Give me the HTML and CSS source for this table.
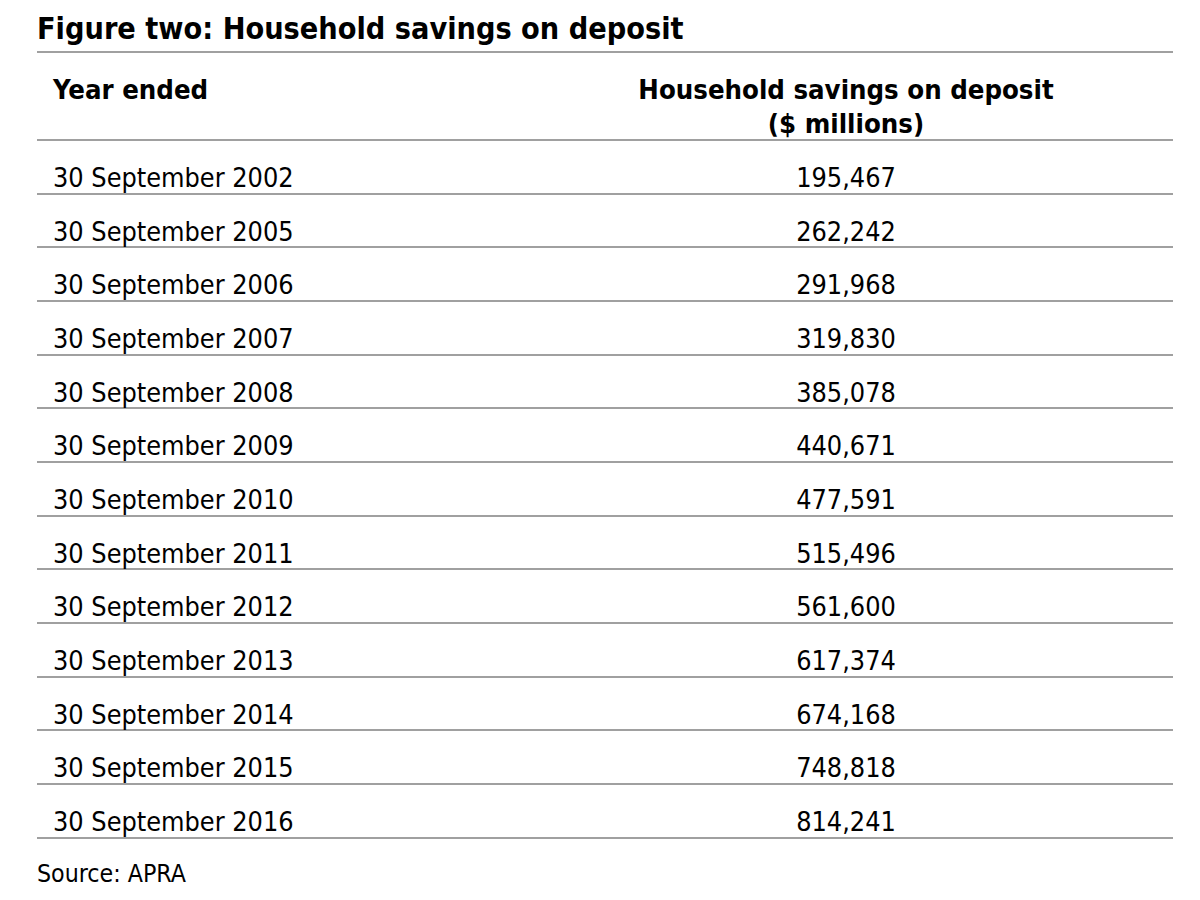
FILE: index.html
```html
<!DOCTYPE html>
<html>
<head>
<meta charset="utf-8">
<link rel="stylesheet" href="styles.css">
</head>
<body>
<div class="figure">
  <h1 class="title">Figure two: Household savings on deposit</h1>
  <div class="table">
    <div class="row head">
      <div class="c1">Year ended</div>
      <div class="c2">Household savings on deposit<br>($ millions)</div>
    </div>
    <div class="row"><div class="c1">30 September 2002</div><div class="c2">195,467</div></div>
    <div class="row"><div class="c1">30 September 2005</div><div class="c2">262,242</div></div>
    <div class="row"><div class="c1">30 September 2006</div><div class="c2">291,968</div></div>
    <div class="row"><div class="c1">30 September 2007</div><div class="c2">319,830</div></div>
    <div class="row"><div class="c1">30 September 2008</div><div class="c2">385,078</div></div>
    <div class="row"><div class="c1">30 September 2009</div><div class="c2">440,671</div></div>
    <div class="row"><div class="c1">30 September 2010</div><div class="c2">477,591</div></div>
    <div class="row"><div class="c1">30 September 2011</div><div class="c2">515,496</div></div>
    <div class="row"><div class="c1">30 September 2012</div><div class="c2">561,600</div></div>
    <div class="row"><div class="c1">30 September 2013</div><div class="c2">617,374</div></div>
    <div class="row"><div class="c1">30 September 2014</div><div class="c2">674,168</div></div>
    <div class="row"><div class="c1">30 September 2015</div><div class="c2">748,818</div></div>
    <div class="row"><div class="c1">30 September 2016</div><div class="c2">814,241</div></div>
  </div>
  <p class="source">Source: APRA</p>
</div>
</body>
</html>
```

FILE: styles.css
```css
html, body {
  margin: 0;
  padding: 0;
  background: #ffffff;
}

body {
  font-family: "DejaVu Sans Condensed", "DejaVu Sans", sans-serif;
  color: #000000;
}

.figure {
  width: 1136px;
  padding-left: 37px;
  padding-top: 11px;
}

.title {
  margin: 0;
  font-size: 30.3px;
  font-weight: bold;
  line-height: 36px;
  height: 40px;
  border-bottom: 2px solid #a0a0a0;
}

.row {
  display: flex;
  height: 51.67px;
  border-bottom: 2px solid #a0a0a0;
  font-size: 26.8px;
  line-height: 30px;
}

.row .c1 {
  width: 482px;
  padding-left: 16px;
  padding-top: 22px;
  box-sizing: border-box;
}

.row .c2 {
  flex: 1;
  text-align: center;
  padding-top: 22px;
}

.row.head {
  height: 86px;
  font-size: 27.3px;
  font-weight: bold;
  line-height: 34px;
}

.row.head .c1,
.row.head .c2 {
  padding-top: 20px;
}

.source {
  margin: 0;
  padding-top: 20px;
  font-size: 24.7px;
  line-height: 30px;
}
```
